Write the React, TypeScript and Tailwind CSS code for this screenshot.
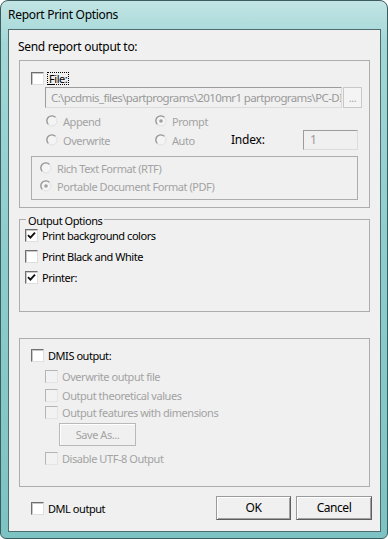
import React from "react";

function CheckBox({ checked = false, disabled = false }: { checked?: boolean; disabled?: boolean }) {
  return (
    <span
      className={`w-[13px] h-[13px] shrink-0 flex items-center justify-center border ${
        disabled
          ? "bg-[#f2f2f2] border-t-[#b4b4b4] border-l-[#b4b4b4] border-r-[#e4e4e4] border-b-[#e4e4e4]"
          : "bg-white border-t-[#6f6f6f] border-l-[#6f6f6f] border-r-[#dedede] border-b-[#dedede] shadow-[inset_1px_1px_0_#c8c8c8]"
      }`}
    >
      {checked && (
        <svg width="9" height="9" viewBox="0 0 9 9">
          <path d="M1 4.2 L3.4 6.6 L8 1.6" stroke="#111" strokeWidth="1.9" fill="none" />
        </svg>
      )}
    </span>
  );
}

function Radio({ checked = false }: { checked?: boolean }) {
  return (
    <svg width="12" height="12" viewBox="0 0 12 12" className="shrink-0">
      <circle cx="6" cy="6" r="5" fill="#f4f4f4" stroke="#e0e0e0" />
      <path d="M2.3 9.4 A5 5 0 0 1 9.4 2.3" stroke="#959595" strokeWidth="1.3" fill="none" />
      {checked && <circle cx="6" cy="6" r="1.8" fill="#a0a0a0" />}
    </svg>
  );
}

function CheckRow({
  label,
  checked,
  disabled,
  className = "",
}: {
  label: React.ReactNode;
  checked?: boolean;
  disabled?: boolean;
  className?: string;
}) {
  return (
    <div className={`h-[16px] flex items-center gap-[4px] ${className}`}>
      <CheckBox checked={checked} disabled={disabled} />
      <span className={disabled ? "text-[#a3a3a3]" : "text-black"}>{label}</span>
    </div>
  );
}

function RadioRow({ label, checked, className = "" }: { label: string; checked?: boolean; className?: string }) {
  return (
    <div className={`h-[16px] flex items-center gap-[5px] text-[#a3a3a3] ${className}`}>
      <Radio checked={checked} />
      <span>{label}</span>
    </div>
  );
}

export default function App() {
  return (
    <div className="w-[388px] h-[539px] flex flex-col pl-[7px] pr-[6px] pb-[6px] border border-[#3c5c5e] rounded-t-[8px] rounded-b-[6px] bg-[linear-gradient(to_bottom,#c2e4e4,#a2d7d7_8%,#8ccccc_50%,#7dc3c3)] font-['Noto_Sans',sans-serif] text-[11px] tracking-[-0.45px] leading-none overflow-hidden">
      {/* Title bar */}
      <div className="h-[28px] shrink-0 flex items-center text-[12px] tracking-[-0.3px] text-black">Report Print Options</div>

      {/* Client area */}
      <div className="h-[503px] border border-[#4e6c6d] bg-[#f0f0f0] flex flex-col">
        <div className="mt-[9px] ml-[9px] h-[16px] flex items-center text-[12px] tracking-[-0.3px] text-black">
          Send report output to:
        </div>

        {/* File box */}
        <div className="mt-[5px] mx-[10px] h-[148px] border border-[#adadad] flex flex-col">
          <div className="mt-[9px] pl-[11px] h-[16px] flex items-center gap-[4px]">
            <CheckBox />
            <span className="text-black outline outline-1 outline-dotted outline-black outline-offset-0 px-[1px]">
              <span className="underline">F</span>ile:
            </span>
          </div>
          <div className="mt-[1px] pl-[25px] h-[21px] flex">
            <div className="w-[297px] h-[21px] border border-t-[#9c9c9c] border-l-[#9c9c9c] border-r-[#dcdcdc] border-b-[#dcdcdc] bg-[#f0f0f0] flex items-center pl-[5px] overflow-hidden whitespace-nowrap text-[#9a9a9a] text-[11.5px] tracking-[-0.62px]">
              C:\pcdmis_files\partprograms\2010mr1 partprograms\PC-DI
            </div>
            <div className="ml-[1px] w-[19px] h-[21px] border border-[#c8c8c8] bg-[#f4f4f4] flex items-center justify-center text-[#a8a8a8] text-[11px]">
              ...
            </div>
          </div>

          <div className="mt-[5px] pl-[26px] h-[16px] flex items-center">
            <RadioRow label="Append" className="w-[109px]" />
            <RadioRow label="Prompt" checked />
          </div>
          <div className="mt-[1px] pl-[26px] h-[20px] flex items-center">
            <RadioRow label="Overwrite" className="w-[109px]" />
            <RadioRow label="Auto" className="w-[76px]" />
            <span className="w-[72px] text-black text-[12px] tracking-[-0.2px]">Index:</span>
            <div className="w-[55px] h-[20px] border border-t-[#9c9c9c] border-l-[#9c9c9c] border-r-[#dcdcdc] border-b-[#dcdcdc] flex items-center pl-[6px] text-[#9a9a9a] text-[12px]">
              1
            </div>
          </div>

          <div className="mt-[6px] ml-[11px] w-[327px] h-[44px] border border-[#adadad] flex flex-col pl-[8px]">
            <RadioRow label="Rich Text Format (RTF)" className="mt-[3px]" />
            <RadioRow label="Portable Document Format (PDF)" checked className="mt-[2px]" />
          </div>
        </div>

        {/* Output Options group */}
        <div className="relative mt-[11px] mx-[10px] h-[93px] border border-[#adadad] flex flex-col pl-[5px]">
          <span className="absolute left-[6px] -top-[8px] px-[2px] bg-[#f0f0f0] text-black h-[16px] flex items-center">
            Output Options
          </span>
          <CheckRow label="Print background colors" checked className="mt-[7px]" />
          <CheckRow label="Print Black and White" className="mt-[5px]" />
          <CheckRow label="Printer:" checked className="mt-[5px]" />
        </div>

        {/* DMIS box */}
        <div className="mt-[26px] mx-[10px] h-[149px] border border-[#adadad] flex flex-col">
          <CheckRow label="DMIS output:" className="mt-[8px] pl-[11px]" />
          <CheckRow label="Overwrite output file" disabled className="mt-[5px] pl-[25px]" />
          <CheckRow label="Output theoretical values" disabled className="mt-[3px] pl-[25px]" />
          <CheckRow label="Output features with dimensions" disabled className="mt-[1px] pl-[25px]" />
          <div className="mt-[3px] ml-[39px] w-[77px] h-[23px] border border-[#b9b9b9] bg-[#f0f0f0] shadow-[inset_1px_1px_0_#ffffff] flex items-center justify-center text-[#a3a3a3]">
            Save As...
          </div>
          <CheckRow label="Disable UTF-8 Output" disabled className="mt-[4px] pl-[25px]" />
        </div>

        {/* Bottom row */}
        <div className="mt-[9px] h-[24px] flex items-center pl-[22px] pr-[8px]">
          <CheckRow label="DML output" className="flex-1" />
          <button className="w-[75px] h-[24px] border border-t-[#9a9a9a] border-l-[#9a9a9a] border-r-[#5e5e5e] border-b-[#5e5e5e] bg-[#f0f0f0] shadow-[inset_1px_1px_0_#ffffff,inset_-1px_-1px_0_#a0a0a0] text-black text-[12px]">
            OK
          </button>
          <button className="ml-[5px] w-[76px] h-[24px] border border-t-[#9a9a9a] border-l-[#9a9a9a] border-r-[#5e5e5e] border-b-[#5e5e5e] bg-[#f0f0f0] shadow-[inset_1px_1px_0_#ffffff,inset_-1px_-1px_0_#a0a0a0] text-black text-[12px]">
            Cancel
          </button>
        </div>
      </div>
    </div>
  );
}
